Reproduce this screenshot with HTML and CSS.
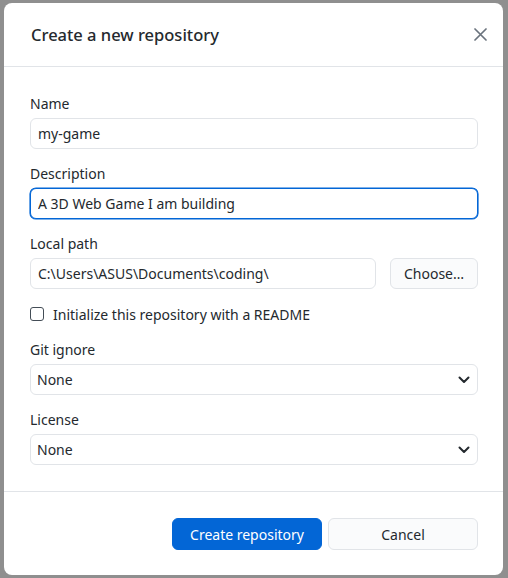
FILE: index.html
```html
<!DOCTYPE html>
<html lang="en">
<head>
<meta charset="utf-8">
<title>Create a new repository</title>
<link rel="stylesheet" href="styles.css">
</head>
<body>
<div class="dialog">
  <header class="dialog-header">
    <h1 class="dialog-title">Create a new repository</h1>
    <button class="close" aria-label="Close">
      <svg width="13" height="13" viewBox="0 0 13 13"><path d="M1 1L12 12M12 1L1 12" stroke="#6a737d" stroke-width="1.7" stroke-linecap="round" fill="none"/></svg>
    </button>
  </header>
  <div class="dialog-body">
    <div class="field">
      <label class="label">Name</label>
      <input class="text-input" type="text" value="my-game">
    </div>
    <div class="field">
      <label class="label">Description</label>
      <input class="text-input focused" type="text" value="A 3D Web Game I am building">
    </div>
    <div class="field">
      <label class="label">Local path</label>
      <div class="path-row">
        <input class="text-input path-input" type="text" value="C:\Users\ASUS\Documents\coding\">
        <button class="btn choose">Choose…</button>
      </div>
    </div>
    <label class="check-row">
      <span class="checkbox"></span>
      <span>Initialize this repository with a README</span>
    </label>
    <div class="field">
      <label class="label">Git ignore</label>
      <div class="select"><span>None</span>
        <svg width="12" height="8" viewBox="0 0 12 8"><path d="M1.5 1.5L6 6L10.5 1.5" stroke="#24292e" stroke-width="2" stroke-linecap="round" stroke-linejoin="round" fill="none"/></svg>
      </div>
    </div>
    <div class="field">
      <label class="label">License</label>
      <div class="select"><span>None</span>
        <svg width="12" height="8" viewBox="0 0 12 8"><path d="M1.5 1.5L6 6L10.5 1.5" stroke="#24292e" stroke-width="2" stroke-linecap="round" stroke-linejoin="round" fill="none"/></svg>
      </div>
    </div>
  </div>
  <footer class="dialog-footer">
    <button class="btn primary">Create repository</button>
    <button class="btn secondary">Cancel</button>
  </footer>
</div>
</body>
</html>
```

FILE: styles.css
```css
* { box-sizing: border-box; }
html, body { margin: 0; padding: 0; }
body {
  background: #8f8f8f;
  width: 508px;
  height: 578px;
  overflow: hidden;
  font-family: "Noto Sans", "Open Sans", sans-serif;
  font-size: 14px;
  color: #24292e;
  padding: 3px 0 0 4px;
}
.dialog {
  width: 499px;
  height: 572px;
  background: #fff;
  border-radius: 8px;
  display: flex;
  flex-direction: column;
}
.dialog-header {
  height: 64px;
  border-bottom: 1px solid #e1e4e8;
  display: flex;
  align-items: center;
  justify-content: space-between;
  padding: 0 12px 0 27px;
}
.dialog-title {
  margin: 0;
  font-size: 16.5px;
  font-weight: 500;
  color: #24292e;
}
.close {
  border: 0;
  background: none;
  padding: 4px;
  display: flex;
}
.dialog-body {
  padding: 27px 25px 26px 26px;
  display: flex;
  flex-direction: column;
  gap: 15px;
  border-bottom: 1px solid #e1e4e8;
}
.field {
  display: flex;
  flex-direction: column;
  gap: 4px;
}
.label {
  line-height: 20px;
  height: 20px;
}
.text-input {
  height: 31px;
  border: 1px solid #e1e4e8;
  border-radius: 6px;
  padding: 0 7px;
  font: inherit;
  color: #24292e;
  outline: none;
  background: #fff;
}
.text-input.focused {
  border-color: #0366d6;
  box-shadow: 0 0 0 0.6px #0366d6;
}
.path-row {
  display: flex;
  gap: 14px;
}
.path-input { flex: 1; min-width: 0; }
.btn {
  font: inherit;
  height: 31px;
  border-radius: 6px;
  border: 1px solid #e1e4e8;
  background: #fafbfc;
  color: #24292e;
  padding: 0 12px;
}
.choose { width: 88px; }
.check-row {
  display: flex;
  align-items: center;
  gap: 9px;
  height: 20px;
  margin-bottom: 1px;
}
.checkbox {
  width: 14px;
  height: 14px;
  border: 1px solid #444d56;
  border-radius: 3px;
  background: #fff;
}
.select {
  height: 31px;
  border: 1px solid #e1e4e8;
  border-radius: 6px;
  padding: 0 7px 0 6px;
  display: flex;
  align-items: center;
  justify-content: space-between;
}
.dialog-footer {
  flex: 1;
  display: flex;
  justify-content: flex-end;
  align-items: flex-start;
  gap: 6px;
  padding: 26px 25px 0 0;
}
.dialog-footer .btn { width: 150px; height: 32px; }
.btn.primary {
  background: #0366d6;
  border-color: #0366d6;
  color: #fff;
}
```
